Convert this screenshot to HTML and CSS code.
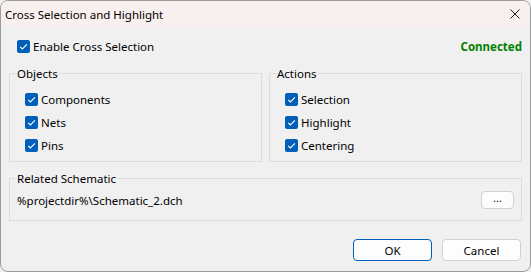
FILE: index.html
```html
<!DOCTYPE html>
<html>
<head>
<meta charset="UTF-8">
<title>Cross Selection and Highlight</title>
<link rel="stylesheet" href="styles.css">
</head>
<body>
<div class="window">
	<div class="titlebar">
		<span class="title">Cross Selection and Highlight</span>
		<svg class="close" width="10" height="10" viewBox="0 0 10 10"><path d="M0.5 0.5 L9.5 9.5 M9.5 0.5 L0.5 9.5" stroke="#1b1b1b" stroke-width="1" fill="none"/></svg>
	</div>
	<div class="content">
		<div class="toprow">
			<label class="check"><svg class="box" width="13" height="13" viewBox="0 0 13 13"><rect width="13" height="13" rx="2" fill="#005fb8"/><path d="M3.2 6.8 L5.4 8.9 L9.9 4.3" stroke="#fff" stroke-width="1.1" fill="none"/></svg>Enable Cross Selection</label>
			<span class="status">Connected</span>
		</div>
		<div class="groups">
			<fieldset class="group">
				<legend>Objects</legend>
				<div class="checklist">
					<label class="check"><svg class="box" width="13" height="13" viewBox="0 0 13 13"><rect width="13" height="13" rx="2" fill="#005fb8"/><path d="M3.2 6.8 L5.4 8.9 L9.9 4.3" stroke="#fff" stroke-width="1.1" fill="none"/></svg>Components</label>
					<label class="check"><svg class="box" width="13" height="13" viewBox="0 0 13 13"><rect width="13" height="13" rx="2" fill="#005fb8"/><path d="M3.2 6.8 L5.4 8.9 L9.9 4.3" stroke="#fff" stroke-width="1.1" fill="none"/></svg>Nets</label>
					<label class="check"><svg class="box" width="13" height="13" viewBox="0 0 13 13"><rect width="13" height="13" rx="2" fill="#005fb8"/><path d="M3.2 6.8 L5.4 8.9 L9.9 4.3" stroke="#fff" stroke-width="1.1" fill="none"/></svg>Pins</label>
				</div>
			</fieldset>
			<fieldset class="group">
				<legend>Actions</legend>
				<div class="checklist">
					<label class="check"><svg class="box" width="13" height="13" viewBox="0 0 13 13"><rect width="13" height="13" rx="2" fill="#005fb8"/><path d="M3.2 6.8 L5.4 8.9 L9.9 4.3" stroke="#fff" stroke-width="1.1" fill="none"/></svg>Selection</label>
					<label class="check"><svg class="box" width="13" height="13" viewBox="0 0 13 13"><rect width="13" height="13" rx="2" fill="#005fb8"/><path d="M3.2 6.8 L5.4 8.9 L9.9 4.3" stroke="#fff" stroke-width="1.1" fill="none"/></svg>Highlight</label>
					<label class="check"><svg class="box" width="13" height="13" viewBox="0 0 13 13"><rect width="13" height="13" rx="2" fill="#005fb8"/><path d="M3.2 6.8 L5.4 8.9 L9.9 4.3" stroke="#fff" stroke-width="1.1" fill="none"/></svg>Centering</label>
				</div>
			</fieldset>
		</div>
		<fieldset class="group related">
			<legend>Related Schematic</legend>
			<div class="pathrow">
				<span class="path">%projectdir%\Schematic_2.dch</span>
				<button class="browse">...</button>
			</div>
		</fieldset>
		<div class="buttons">
			<button class="btn primary">OK</button>
			<button class="btn">Cancel</button>
		</div>
	</div>
</div>
</body>
</html>
```

FILE: styles.css
```css
body {
	margin: 0;
	background-color: #f0f0f0;
	font-family: "Noto Sans", "Open Sans", sans-serif;
	font-size: 11.5px;
	color: #000;
}

.window {
	width: 531px;
	height: 272px;
	box-sizing: border-box;
	border: 1px solid #9c9c9c;
	border-radius: 8px;
	overflow: hidden;
	background: #f0f0f0;
}

.titlebar {
	height: 25px;
	background: #f8f0ee;
	display: flex;
	align-items: center;
	justify-content: space-between;
	padding: 0 10px 0 4px;
}

.titlebar>.title {
	font-size: 11.5px;
	color: #000;
	padding-top: 1px;
}

.titlebar>.close {
	margin-top: 1px;
}

.content {
	padding: 12px 8px 0 8px;
	display: flex;
	flex-direction: column;
}

.toprow {
	height: 16px;
	display: flex;
	align-items: center;
	justify-content: space-between;
	padding-left: 8px;
}

.status {
	color: #008000;
	font-weight: bold;
}

.check {
	display: flex;
	align-items: center;
	height: 16px;
	gap: 3px;
}

.check>.box {
	flex: none;
}

.groups {
	display: flex;
	gap: 7px;
	margin-top: 11px;
}

.group {
	flex: 1;
	min-width: 0;
	margin: 0;
	border: 1px solid #dcdcdc;
	padding: 9px 7px 8px 6px;
}

.group>legend {
	padding: 0 1px;
	line-height: 17px;
}

.checklist {
	display: flex;
	flex-direction: column;
	gap: 7px;
	padding-left: 9px;
}

.related {
	margin-top: 8px;
	padding: 4px 7px 11px 6px;
}

.pathrow {
	height: 18px;
	display: flex;
	align-items: center;
	justify-content: space-between;
	padding-left: 1px;
}

.browse {
	width: 33px;
	height: 18px;
	padding: 0 0 4px 0;
	border: 1px solid #d0d0d0;
	border-radius: 4px;
	background: #fdfdfd;
	font-family: inherit;
	font-size: 11.5px;
	color: #1a1a1a;
	line-height: 12px;
}

.buttons {
	display: flex;
	justify-content: flex-end;
	gap: 10px;
	margin-top: 18px;
	padding-right: 1px;
}

.btn {
	width: 79px;
	height: 22px;
	border: 1px solid #d0d0d0;
	border-radius: 4px;
	background: #fdfdfd;
	font-family: inherit;
	font-size: 11.5px;
	color: #000;
	padding: 0;
}

.btn.primary {
	border-color: #005fb8;
}
```
